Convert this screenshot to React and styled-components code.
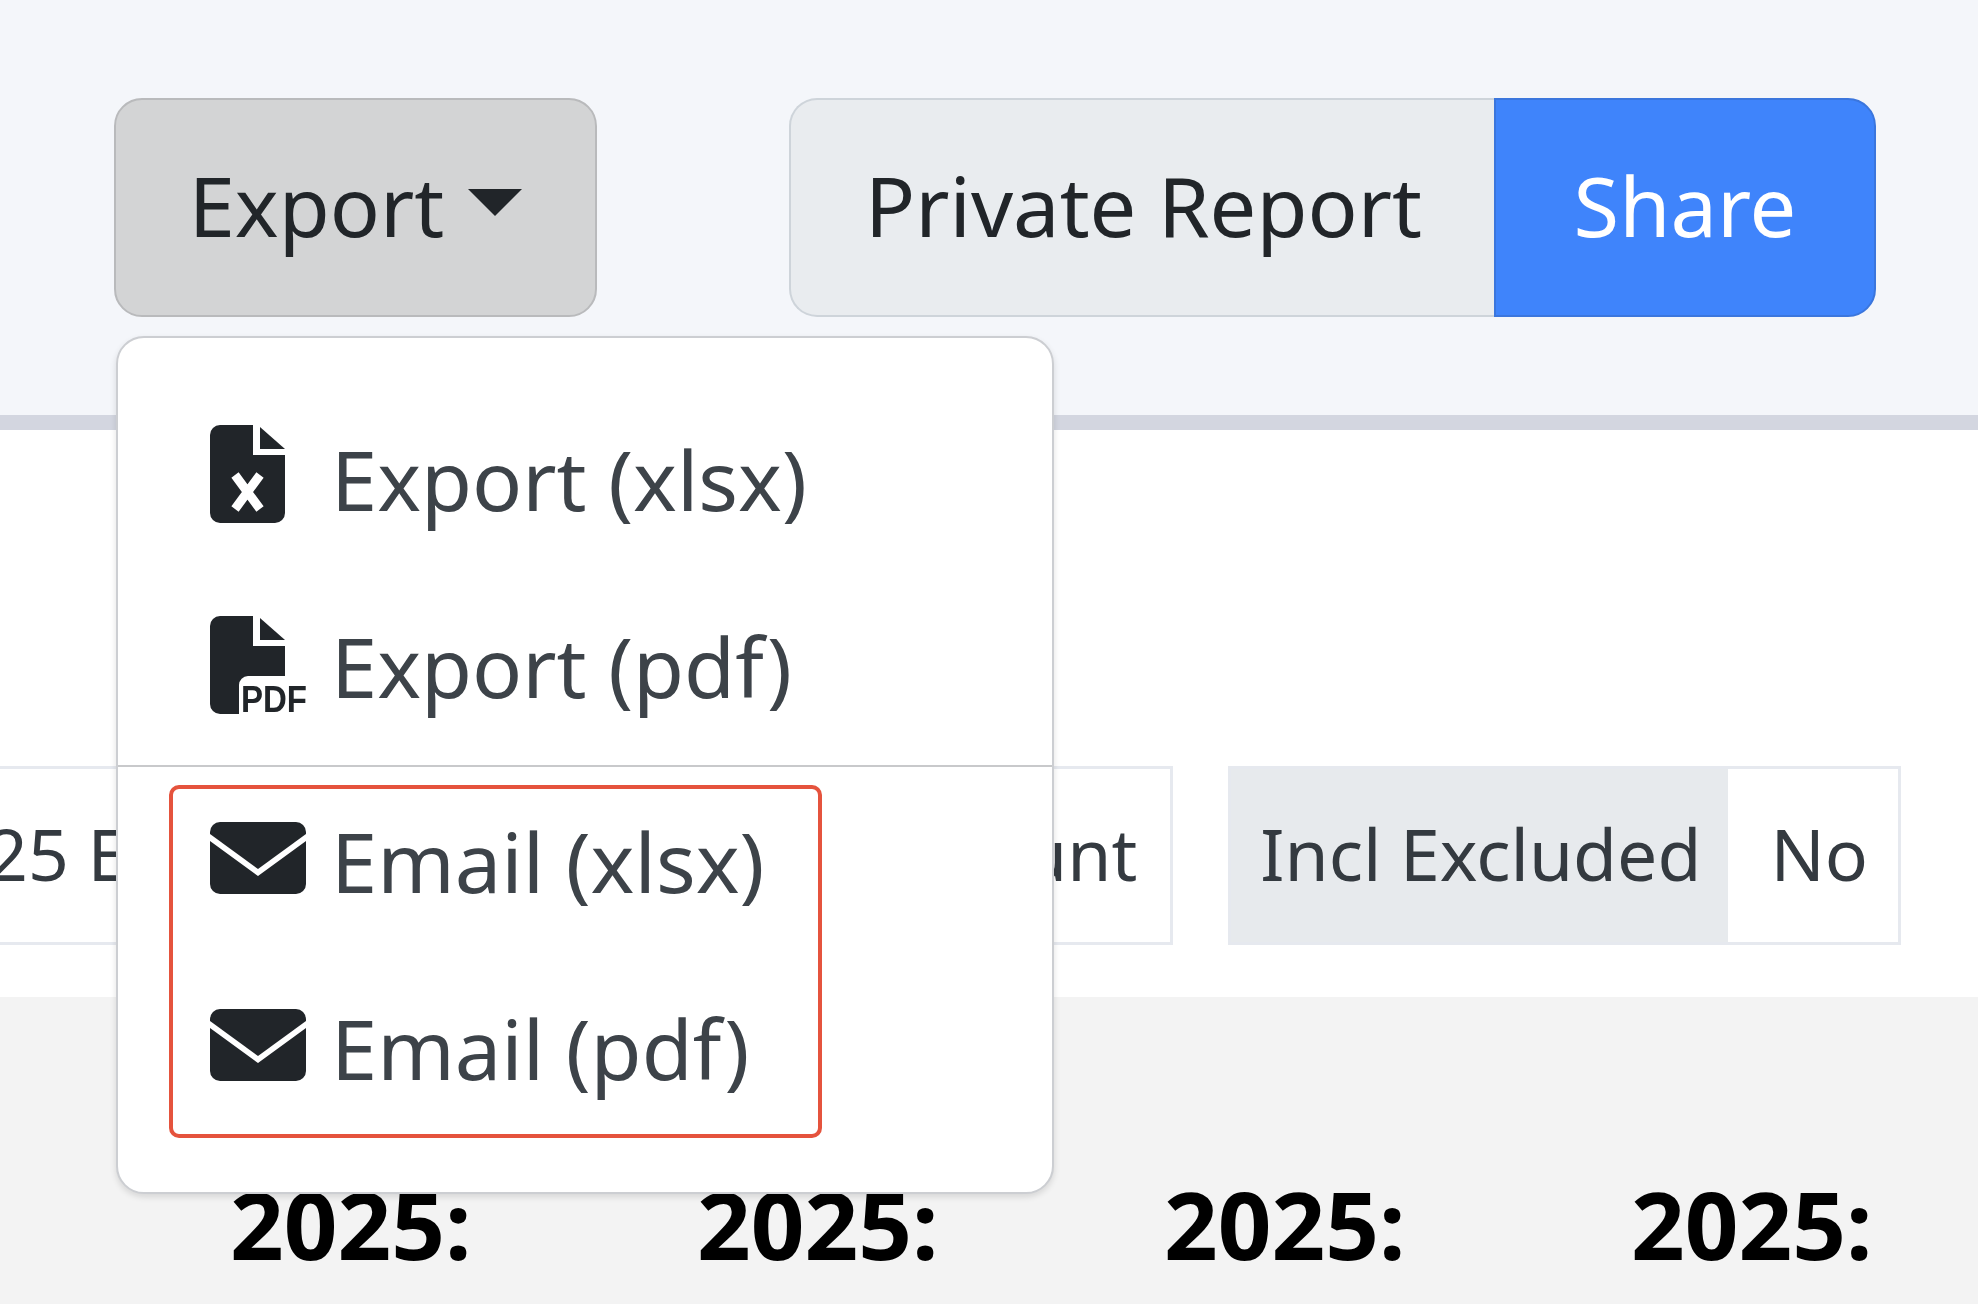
import React from 'react'
import styled, { createGlobalStyle } from 'styled-components'

const Global = createGlobalStyle`
    html, body { margin: 0; padding: 0; background: #fff; }
    body { font-family: "Noto Sans", sans-serif; overflow: hidden; }
`

const Page = styled.div`
    position: relative;
    width: 1978px;
    height: 1304px;
    overflow: hidden;
    display: flex;
    flex-direction: column;
    filter: blur(0.6px);
`

const TopBar = styled.div`
    height: 430px;
    box-sizing: border-box;
    flex: none;
    background-color: #f4f6fa;
    border-bottom: 15px solid #d3d6e0;
    padding: 98px 102px 0 114px;
    display: flex;
    justify-content: space-between;
    align-items: flex-start;
`

const ExportBtn = styled.div`
    width: 483px;
    height: 219px;
    box-sizing: border-box;
    padding-bottom: 7px;
    background: #d3d4d5;
    border: 2px solid #b9babc;
    border-radius: 28px;
    color: #212529;
    font-size: 83px;
    display: flex;
    align-items: center;
    justify-content: center;
    gap: 24px;
`

const Caret = styled.span`
    width: 0;
    height: 0;
    border-left: 27px solid transparent;
    border-right: 27px solid transparent;
    border-top: 27px solid #212529;
    margin-bottom: 4px;
`

const ShareGroup = styled.div`
    display: flex;
    height: 219px;
    width: 1087px;
`

const PrivateLabel = styled.div`
    flex: 1;
    background: #e9ecef;
    border: 2px solid #ced4da;
    border-right: 0;
    border-radius: 28px 0 0 28px;
    color: #212529;
    font-size: 83px;
    padding: 0 0 7px 74px;
    display: flex;
    align-items: center;
`

const ShareBtn = styled.div`
    width: 382px;
    box-sizing: border-box;
    padding-bottom: 7px;
    background: #3f84fb;
    border: 2px solid #3b76dd;
    border-radius: 0 28px 28px 0;
    color: #fff;
    font-size: 83px;
    display: flex;
    align-items: center;
    justify-content: center;
`

const FilterRow = styled.div`
    margin-top: 336px;
    height: 179px;
    flex: none;
    display: flex;
    justify-content: flex-end;
    gap: 55px;
    padding-right: 77px;
`

const Chip = styled.div`
    display: flex;
    flex: none;
    box-sizing: border-box;
    border: 3px solid #e6e9ef;
    font-size: 71.5px;
    color: #343a40;
    align-items: stretch;
`

const ChipCell = styled.div`
    display: flex;
    align-items: center;
    padding: 0 ${p => p.$right || '29px'} 4px ${p => p.$left || '29px'};
    background: ${p => p.$shaded ? '#e7eaed' : '#fff'};
    width: ${p => p.$width || 'auto'};
    justify-content: ${p => p.$justify || 'flex-start'};
    white-space: nowrap;
    box-sizing: border-box;
`

const Band = styled.div`
    margin-top: 52px;
    flex: 1;
    background: #f3f3f3;
    padding-top: 180px;
`

const YearGrid = styled.div`
    display: grid;
    grid-template-columns: repeat(5, 467px);
    margin-left: -237px;
`

const YearLabel = styled.div`
    font-weight: 700;
    font-size: 94px;
    line-height: 1;
    color: #000;
`

const Menu = styled.div`
    position: absolute;
    left: 116px;
    top: 336px;
    width: 938px;
    height: 858px;
    box-sizing: border-box;
    background: #fff;
    border: 2px solid #ccced2;
    border-radius: 28px;
    box-shadow: 0 3px 6px rgba(0,0,0,0.12);
    padding-top: 47px;
    display: flex;
    flex-direction: column;
`

const MenuItem = styled.div`
    height: 187px;
    flex: none;
    display: flex;
    align-items: center;
    padding-left: 92px;
    font-size: 83px;
    color: #3d4349;
    gap: 21px;
`

const MenuDivider = styled.div`
    height: 2px;
    background: #c8c9cb;
    margin-top: 6px;
    flex: none;
`

const Highlight = styled.div`
    position: absolute;
    left: 51px;
    top: 447px;
    width: 653px;
    height: 353px;
    box-sizing: border-box;
    border: 4px solid #e5533d;
    border-radius: 10px;
`

const IconSlot = styled.div`
    width: 100px;
    flex: none;
    display: flex;
    margin-bottom: ${p => p.$lift || '10px'};
`

const FileX = () => (
    <svg width="75" height="98" viewBox="0 0 75 98">
        <path fill="#212529" d="M10 0H43V30H75V88a10 10 0 0 1-10 10H10A10 10 0 0 1 0 88V10A10 10 0 0 1 10 0Z" />
        <path fill="#212529" d="M50 2L75 24H50Z" />
        <path fill="none" stroke="#fff" strokeWidth="9" d="M25 50L50 84M50 50L25 84" />
    </svg>
)

const FilePdf = () => (
    <svg width="100" height="98" viewBox="0 0 100 98">
        <path fill="#212529" d="M10 0H43V30H75V60H38a9 9 0 0 0-9 9V98H10A10 10 0 0 1 0 88V10A10 10 0 0 1 10 0Z" />
        <path fill="#212529" d="M50 2L75 24H50Z" />
        <text x="31" y="96" fontFamily="Liberation Sans, sans-serif" fontWeight="700" fontSize="36" fill="#212529" textLength="66" lengthAdjust="spacingAndGlyphs">PDF</text>
    </svg>
)

const Mail = () => (
    <svg width="96" height="72" viewBox="0 0 96 72">
        <path fill="#212529" d="M10 0H86A10 10 0 0 1 96 10V12L48 47L0 12V10A10 10 0 0 1 10 0Z" />
        <path fill="#212529" d="M0 19L48 54L96 19V62A10 10 0 0 1 86 72H10A10 10 0 0 1 0 62Z" />
    </svg>
)

export default function App() {
    return (
        <Page>
            <Global />
            <TopBar>
                <ExportBtn>Export<Caret /></ExportBtn>
                <ShareGroup>
                    <PrivateLabel>Private Report</PrivateLabel>
                    <ShareBtn>Share</ShareBtn>
                </ShareGroup>
            </TopBar>
            <FilterRow>
                <Chip>
                    <ChipCell $width="1294px" $justify="space-between" $right="33px">
                        <span>2025 Expense</span><span>Amount</span>
                    </ChipCell>
                </Chip>
                <Chip>
                    <ChipCell $shaded $left="29px" $right="27px">Incl Excluded</ChipCell>
                    <ChipCell $left="42px" $right="30px">No</ChipCell>
                </Chip>
            </FilterRow>
            <Band>
                <YearGrid>
                    <YearLabel>2025:</YearLabel>
                    <YearLabel>2025:</YearLabel>
                    <YearLabel>2025:</YearLabel>
                    <YearLabel>2025:</YearLabel>
                    <YearLabel>2025:</YearLabel>
                </YearGrid>
            </Band>
            <Menu>
                <MenuItem><IconSlot><FileX /></IconSlot>Export (xlsx)</MenuItem>
                <MenuItem><IconSlot $lift="2px"><FilePdf /></IconSlot>Export (pdf)</MenuItem>
                <MenuDivider />
                <MenuItem><IconSlot $lift="6px"><Mail /></IconSlot>Email (xlsx)</MenuItem>
                <MenuItem><IconSlot $lift="6px"><Mail /></IconSlot>Email (pdf)</MenuItem>
                <Highlight />
            </Menu>
        </Page>
    )
}
